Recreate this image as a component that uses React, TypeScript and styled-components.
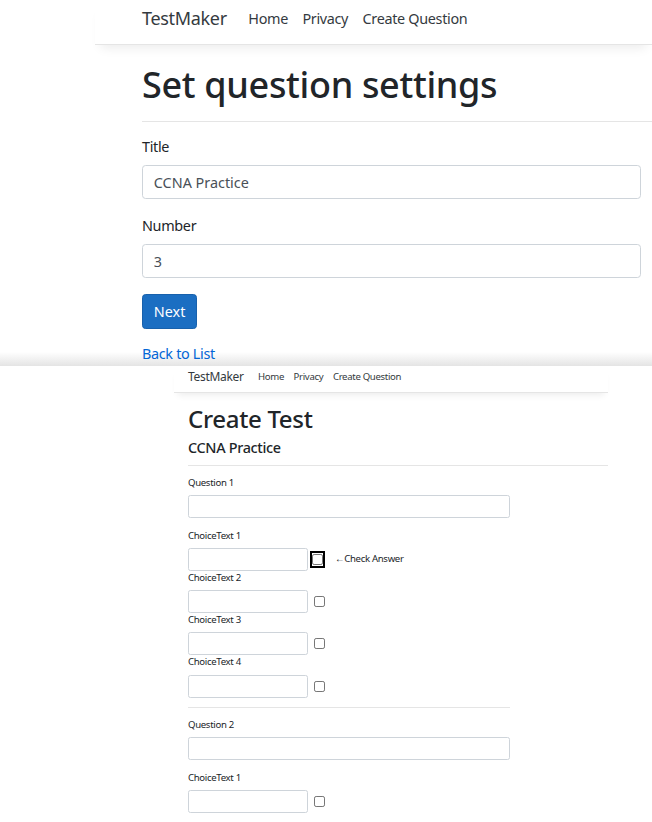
import styled, { createGlobalStyle } from 'styled-components';

const GlobalStyle = createGlobalStyle`
  html, body {
    margin: 0;
    padding: 0;
    background: #fff;
  }
  body {
    font-family: "Noto Sans", "Open Sans", sans-serif;
    letter-spacing: -0.02em;
    color: #212529;
  }
  * {
    box-sizing: border-box;
  }
`;

interface ShotProps {
  $base: number;
  $height?: number;
  $fade?: boolean;
}

const Shot = styled.section<ShotProps>`
  font-size: ${({ $base }) => $base}px;
  line-height: 1.5;
  height: ${({ $height }) => ($height ? `${$height}px` : 'auto')};
  overflow: hidden;
  background: ${({ $fade }) =>
    $fade
      ? 'linear-gradient(to bottom, #fff 0, #fff calc(100% - 14px), #e4e4e4 100%)'
      : '#fff'};
`;

const Navbar = styled.nav<{ $left: number; $width: number; $pad: number; $h: number }>`
  display: flex;
  align-items: center;
  margin-left: ${({ $left }) => $left}px;
  width: ${({ $width }) => $width}px;
  height: ${({ $h }) => $h}px;
  padding-left: ${({ $pad }) => $pad}px;
  padding-bottom: 0.45em;
  border-bottom: 1px solid #e5e5e5;
  box-shadow: 0 0.6em 0.75em -0.4em rgba(0, 0, 0, 0.08);
  background: #fff;
`;

const Brand = styled.a`
  font-size: 1.25em;
  margin-right: 0.8em;
  color: #343a40;
  text-decoration: none;
`;

const NavLink = styled.a`
  padding: 0 0.5em;
  color: #343a40;
  text-decoration: none;
`;

const Main = styled.main<{ $left: number; $width: number }>`
  margin-left: ${({ $left }) => $left}px;
  width: ${({ $width }) => $width}px;
  padding-top: 1.25em;
`;

const Title = styled.h1`
  font-size: 2.5em;
  font-weight: 500;
  line-height: 1.2;
  margin: 0;
`;

const Subtitle = styled.h4`
  font-size: 1.5em;
  font-weight: 500;
  line-height: 1.2;
  margin: 0.333em 0 0;
`;

const Rule = styled.hr`
  border: 0;
  border-top: 1px solid rgba(0, 0, 0, 0.1);
  margin: 1em 0;
`;

const Form = styled.form<{ $width: number }>`
  width: ${({ $width }) => $width}px;
`;

const Group = styled.div<{ $tight?: boolean }>`
  margin-bottom: ${({ $tight }) => ($tight ? 0 : '1.1em')};
`;

const Label = styled.label`
  display: block;
  margin-bottom: 0.5em;
`;

const TextInput = styled.input<{ $narrow?: boolean }>`
  display: block;
  width: ${({ $narrow }) => ($narrow ? '12.5em' : '100%')};
  height: 2.4em;
  padding: 0.375em 0.75em;
  border: 1px solid #ced4da;
  border-radius: 0.25em;
  font: inherit;
  color: #495057;
  background: #fff;
`;

const ChoiceRow = styled.div`
  display: flex;
  align-items: center;
`;

const CheckSlot = styled.span<{ $focused?: boolean }>`
  display: inline-flex;
  align-items: center;
  justify-content: center;
  margin-left: ${({ $focused }) => ($focused ? '0.2em' : '0.625em')};
  width: ${({ $focused }) => ($focused ? '1.56em' : 'auto')};
  height: ${({ $focused }) => ($focused ? '1.77em' : 'auto')};
  border: ${({ $focused }) => ($focused ? '2px solid #000' : 'none')};
`;

const Check = styled.input`
  appearance: none;
  display: block;
  width: 0.83em;
  height: 0.83em;
  margin: 0;
  border: 1px solid #767676;
  border-radius: 0.16em;
  background: #fff;
  outline: none;
`;

const Hint = styled.span`
  margin-left: 1.05em;
`;

const Button = styled.button`
  display: inline-block;
  height: 2.4em;
  padding: 0 0.75em;
  font: inherit;
  line-height: 1.5;
  color: #fff;
  background: #1b6ec2;
  border: 1px solid #1861ac;
  border-radius: 0.25em;
`;

const BackLink = styled.a`
  display: block;
  margin-top: 1em;
  color: #0366d6;
  text-decoration: none;
`;

const NavItems = () => (
  <>
    <Brand href="#">TestMaker</Brand>
    <NavLink href="#">Home</NavLink>
    <NavLink href="#">Privacy</NavLink>
    <NavLink href="#">Create Question</NavLink>
  </>
);

const Choice = ({ n, focused, hint }: { n: number; focused?: boolean; hint?: boolean }) => (
  <Group $tight>
    <Label>ChoiceText {n}</Label>
    <ChoiceRow>
      <TextInput $narrow />
      <CheckSlot $focused={focused}>
        <Check type="checkbox" />
      </CheckSlot>
      {hint && <Hint>←Check Answer</Hint>}
    </ChoiceRow>
  </Group>
);

export default function App() {
  return (
    <>
      <GlobalStyle />
      <Shot $base={14.4} $height={366} $fade>
        <Navbar $left={95} $width={557} $pad={47} $h={45}>
          <NavItems />
        </Navbar>
        <Main $left={142} $width={510}>
          <Title>Set question settings</Title>
          <Rule />
          <Form $width={499}>
            <Group>
              <Label>Title</Label>
              <TextInput defaultValue="CCNA Practice" />
            </Group>
            <Group>
              <Label>Number</Label>
              <TextInput defaultValue="3" />
            </Group>
            <Button type="button">Next</Button>
          </Form>
          <BackLink href="#">Back to List</BackLink>
        </Main>
      </Shot>
      <Shot $base={9.6}>
        <Navbar $left={174} $width={434} $pad={14} $h={27}>
          <NavItems />
        </Navbar>
        <Main $left={188} $width={420}>
          <Title>Create Test</Title>
          <Subtitle>CCNA Practice</Subtitle>
          <Rule />
          <Form $width={322}>
            <Group>
              <Label>Question 1</Label>
              <TextInput />
            </Group>
            <Choice n={1} focused hint />
            <Choice n={2} />
            <Choice n={3} />
            <Choice n={4} />
            <Rule />
            <Group>
              <Label>Question 2</Label>
              <TextInput />
            </Group>
            <Choice n={1} />
          </Form>
        </Main>
      </Shot>
    </>
  );
}
